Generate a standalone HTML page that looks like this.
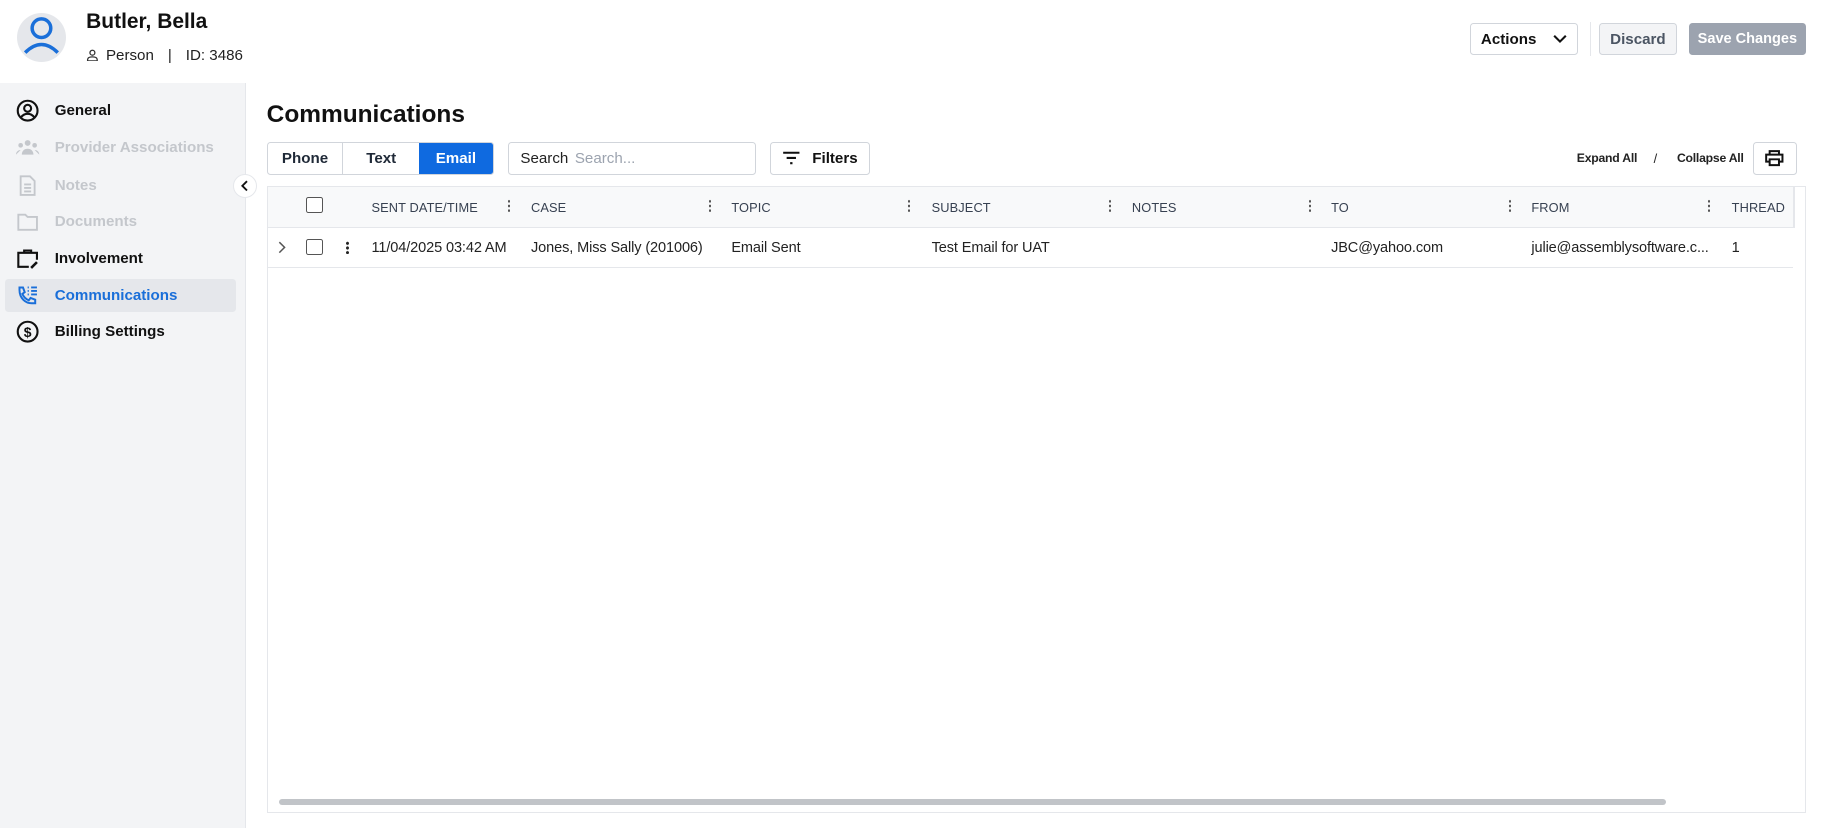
<!DOCTYPE html>
<html><head><style>
html{zoom:1.16454}
*{box-sizing:border-box;margin:0;padding:0}
body{width:1568px;height:711px;position:relative;overflow:hidden;background:#fff;font-family:"Liberation Sans","DejaVu Sans",sans-serif;color:#1f2937}
.a{position:absolute}
.btn{position:absolute;border:1px solid #d1d5db;border-radius:3px;font-size:13px;font-weight:600;display:flex;align-items:center;justify-content:center}
.nav{position:absolute;left:14px;font-size:13px;font-weight:600;display:flex;align-items:center;gap:13px}
.nav svg{width:20px;height:20px}
.dis{color:#c4c7cc}
.th{position:absolute;top:172px;font-size:11px;color:#374151;letter-spacing:.1px}
.dots{position:absolute;top:171px;width:2px;height:11px;background:radial-gradient(circle,#555 1px,transparent 1.2px) 0 0/2px 4px repeat-y}
.td{position:absolute;top:206px;font-size:12.5px;color:#222;white-space:nowrap;letter-spacing:-.1px}
</style></head><body>
<div class="a" style="left:15px;top:11px;width:42px;height:42px;border-radius:50%;background:#e5e7eb;overflow:hidden">
<svg width="42" height="42" viewBox="0 0 42 42"><circle cx="21" cy="13" r="8" fill="none" stroke="#1a6fd9" stroke-width="3"/><path d="M7 34 Q21 20 35 34" fill="none" stroke="#1a6fd9" stroke-width="3"/></svg></div>
<div class="a" style="left:74px;top:9px;font-size:18px;font-weight:700;color:#111">Butler, Bella</div>
<div class="a" style="left:74px;top:40px;font-size:13px;color:#222;display:flex;align-items:center;gap:6px">
<svg width="11" height="11" viewBox="0 0 12 12"><circle cx="6" cy="3.5" r="2.3" fill="none" stroke="#333" stroke-width="1.2"/><path d="M1.5 11.2V10c0-1.6 1.5-2.6 4.5-2.6s4.5 1 4.5 2.6v1.2z" fill="none" stroke="#333" stroke-width="1.2"/></svg>Person<span style="margin:0 6px">|</span>ID: 3486</div>
<div class="btn" style="left:1262px;top:20px;width:93px;height:27px;color:#111">Actions<svg style="margin-left:14px" width="12" height="8" viewBox="0 0 12 8"><path d="M1 1.5l5 5 5-5" fill="none" stroke="#111" stroke-width="1.8"/></svg></div>
<div class="a" style="left:1365px;top:19px;width:1px;height:29px;background:#e5e7eb"></div>
<div class="btn" style="left:1373px;top:20px;width:67px;height:27px;background:#f3f4f6;color:#4b5563">Discard</div>
<div class="btn" style="left:1450px;top:20px;width:101px;height:27px;background:#9ca3af;border-color:#9ca3af;color:#fff;font-size:12.5px">Save Changes</div>
<div class="a" style="left:0;top:71px;width:211px;height:640px;background:#f3f4f6;border-right:1px solid #e5e7eb"></div>
<div class="a" style="left:4px;top:240px;width:199px;height:28px;background:#e5e7eb;border-radius:3px"></div>
<div class="nav" style="top:85px;color:#111"><svg viewBox="0 0 20 20"><circle cx="10" cy="10" r="8.5" fill="none" stroke="#111" stroke-width="1.8"/><circle cx="10" cy="8" r="3" fill="none" stroke="#111" stroke-width="1.8"/><path d="M4.5 15.5c1.5-2 3.5-2.8 5.5-2.8s4 .8 5.5 2.8" fill="none" stroke="#111" stroke-width="1.8"/></svg>General</div>
<div class="nav dis" style="top:117px"><svg viewBox="0 0 20 20"><circle cx="10" cy="6" r="2.5" fill="#c4c7cc"/><circle cx="4" cy="8" r="2" fill="#c4c7cc"/><circle cx="16" cy="8" r="2" fill="#c4c7cc"/><path d="M5 16c0-3 2-5 5-5s5 2 5 5z M0 16c0-2 1.5-4 4-4 M20 16c0-2-1.5-4-4-4" fill="#c4c7cc"/></svg>Provider Associations</div>
<div class="nav dis" style="top:149px"><svg viewBox="0 0 20 20"><path d="M4 2h8l4 4v12H4z M7 9h6M7 12h6M7 15h6" fill="none" stroke="#c4c7cc" stroke-width="1.6"/></svg>Notes</div>
<div class="nav dis" style="top:180px"><svg viewBox="0 0 20 20"><path d="M2 4h6l2 2h8v11H2z" fill="none" stroke="#c4c7cc" stroke-width="1.6"/></svg>Documents</div>
<div class="nav" style="top:212px;color:#111"><svg viewBox="0 0 20 20"><path d="M7 5V3h6v2 M11 17H2V5h16v6" fill="none" stroke="#111" stroke-width="1.8"/><path d="M13 18l5-5" stroke="#111" stroke-width="2.2"/></svg>Involvement</div>
<div class="nav" style="top:244px;color:#1a6fd9"><svg viewBox="0 0 20 20"><path d="M3 3h3l1.5 4-2 1.5c1 2.5 3 4.5 5.5 5.5l1.5-2 4 1.5v3h-2C8 17 3 12 3 5z" fill="none" stroke="#1a6fd9" stroke-width="1.7"/><path d="M10 3h1M13 3h5M10 6h1M13 6h5M10 9h1M13 9h5" stroke="#1a6fd9" stroke-width="1.6"/></svg>Communications</div>
<div class="nav" style="top:275px;color:#111"><svg viewBox="0 0 20 20"><circle cx="10" cy="10" r="8.5" fill="none" stroke="#111" stroke-width="1.8"/><text x="10" y="14.5" font-size="12" font-weight="700" text-anchor="middle" fill="#111" font-family="Liberation Sans">$</text></svg>Billing Settings</div>
<div class="a" style="left:200px;top:149px;width:21px;height:21px;border-radius:50%;background:#fff;border:1px solid #e5e7eb;display:flex;align-items:center;justify-content:center"><svg width="8" height="10" viewBox="0 0 8 10"><path d="M6 1L2 5l4 4" fill="none" stroke="#111" stroke-width="1.6"/></svg></div>
<div class="a" style="left:229px;top:87px;font-size:21px;font-weight:600;color:#111">Communications</div>
<div class="a" style="left:229px;top:122px;width:195px;height:28px;border:1px solid #d1d5db;border-radius:3px;display:flex;font-size:13px;font-weight:600;overflow:hidden">
<div style="width:65px;display:flex;align-items:center;justify-content:center;border-right:1px solid #d1d5db">Phone</div>
<div style="width:65px;display:flex;align-items:center;justify-content:center">Text</div>
<div style="flex:1;display:flex;align-items:center;justify-content:center;background:#0f6ae0;color:#fff">Email</div></div>
<div class="a" style="left:436px;top:122px;width:213px;height:28px;border:1px solid #d1d5db;border-radius:3px;font-size:13px;padding:6px 10px;color:#222">Search <span style="color:#9ca3af;margin-left:2px">Search...</span></div>
<div class="btn" style="left:661px;top:122px;width:86px;height:28px;color:#111"><svg style="margin-right:10px" width="16" height="12" viewBox="0 0 16 12"><path d="M1 1.5h14M4 6h8M7 10.5h2" stroke="#111" stroke-width="1.8"/></svg>Filters</div>
<div class="a" style="left:1354px;top:130px;font-size:10.5px;color:#222;font-weight:600;letter-spacing:-.2px">Expand All</div>
<div class="a" style="left:1420px;top:130px;font-size:11px;color:#222">/</div>
<div class="a" style="left:1440px;top:130px;font-size:10.5px;color:#222;font-weight:600;letter-spacing:-.2px">Collapse All</div>
<div class="btn" style="left:1505px;top:122px;width:38px;height:28px"><svg width="16" height="14" viewBox="0 0 16 14"><path d="M4 4V1h8v3 M4 10H1V4h14v6h-3 M4 8h8v5H4z" fill="none" stroke="#111" stroke-width="1.7"/></svg></div>
<div class="a" style="left:229px;top:160px;width:1322px;height:538px;border:1px solid #e5e7eb"></div>
<div class="a" style="left:230px;top:161px;width:1310px;height:35px;background:#f8f9fa;border-bottom:1px solid #e5e7eb"></div>
<div class="a" style="left:1540px;top:161px;width:1px;height:35px;background:#e5e7eb"></div>
<div class="a" style="left:230px;top:229px;width:1310px;height:1px;background:#e5e7eb"></div>
<div class="a" style="left:263px;top:169px;width:14px;height:14px;border:1px solid #555;border-radius:2px;background:#fff"></div>
<div class="th" style="left:319px">SENT DATE/TIME</div><div class="dots" style="left:436px"></div>
<div class="th" style="left:456px">CASE</div><div class="dots" style="left:609px"></div>
<div class="th" style="left:628px">TOPIC</div><div class="dots" style="left:780px"></div>
<div class="th" style="left:800px">SUBJECT</div><div class="dots" style="left:952px"></div>
<div class="th" style="left:972px">NOTES</div><div class="dots" style="left:1124px"></div>
<div class="th" style="left:1143px">TO</div><div class="dots" style="left:1296px"></div>
<div class="th" style="left:1315px">FROM</div><div class="dots" style="left:1467px"></div>
<div class="th" style="left:1487px">THREAD</div>
<svg class="a" style="left:238px;top:207px" width="8" height="11" viewBox="0 0 8 11"><path d="M2 1l4.5 4.5L2 10" fill="none" stroke="#555" stroke-width="1.3"/></svg>
<div class="a" style="left:263px;top:205px;width:14px;height:14px;border:1px solid #555;border-radius:2px;background:#fff"></div>
<div class="dots" style="left:297px;top:207px;width:3px;height:11px;background:radial-gradient(circle,#222 1.3px,transparent 1.5px) 0 0/3px 4px repeat-y"></div>
<div class="td" style="left:319px">11/04/2025 03:42 AM</div>
<div class="td" style="left:456px">Jones, Miss Sally (201006)</div>
<div class="td" style="left:628px">Email Sent</div>
<div class="td" style="left:800px">Test Email for UAT</div>
<div class="td" style="left:1143px">JBC@yahoo.com</div>
<div class="td" style="left:1315px">julie@assemblysoftware.c...</div>
<div class="td" style="left:1487px">1</div>
<div class="a" style="left:240px;top:686px;width:1191px;height:5px;background:#c1c4c8;border-radius:3px"></div>
</body></html>
